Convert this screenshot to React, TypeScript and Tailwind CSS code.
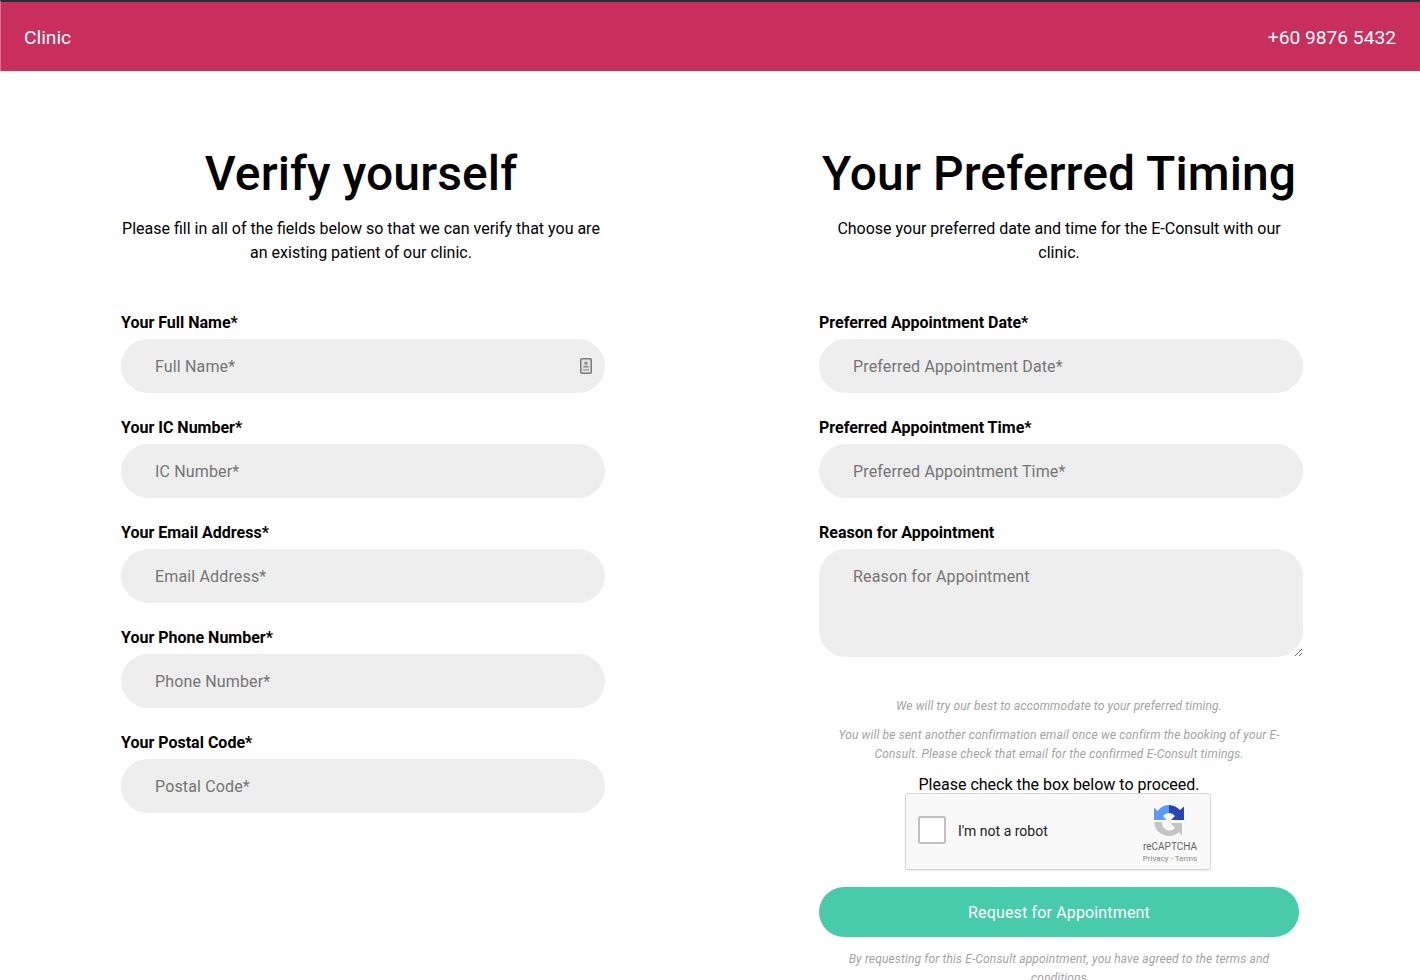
const leftFields = [
  { label: "Your Full Name*", placeholder: "Full Name*", icon: true },
  { label: "Your IC Number*", placeholder: "IC Number*" },
  { label: "Your Email Address*", placeholder: "Email Address*" },
  { label: "Your Phone Number*", placeholder: "Phone Number*" },
  { label: "Your Postal Code*", placeholder: "Postal Code*" },
];

const inputClass =
  "w-full h-[54px] rounded-[27px] bg-[#eeeeee] px-[34px] text-base tracking-[0.15px] text-black outline-none placeholder:text-[#757575]";
const labelClass = "block h-[29px] pt-[1px] text-base leading-[24px] font-bold text-black";
const noteClass = "text-xs leading-[19px] tracking-[0.15px] text-[#a3a3a3] italic";

function ContactIcon() {
  return (
    <svg width="12" height="16" viewBox="0 0 12 16" className="absolute right-[13px] top-[19px]">
      <rect x="0.75" y="0.75" width="10.5" height="14.5" rx="1" fill="#e4e4e4" stroke="#7b7b7b" strokeWidth="1.5" />
      <circle cx="6" cy="5.2" r="1.6" fill="#8a8a8a" />
      <path d="M3 9.5c0-1.2 1-1.8 3-1.8s3 .6 3 1.8z" fill="#8a8a8a" />
      <rect x="3" y="11" width="6" height="1.6" fill="#a5a5a5" />
    </svg>
  );
}

function Field({ label, placeholder, icon }: { label: string; placeholder: string; icon?: boolean }) {
  return (
    <div className="mb-[22px]">
      <label className={labelClass}>{label}</label>
      <div className="relative">
        <input className={inputClass} placeholder={placeholder} />
        {icon && <ContactIcon />}
      </div>
    </div>
  );
}

function RecaptchaLogo() {
  return (
    <svg width="32" height="32" viewBox="0 0 32 32">
      <path d="M15 0V8A8 8 0 0 0 9 11L12.5 15H0V2.5L3.5 6A15 15 0 0 1 15 0Z" fill="#5b9bf8" />
      <path d="M15 0A16 16 0 0 1 26 5L30 1.5V15H17L21 11A8 8 0 0 0 15 8Z" fill="#2a44b5" />
      <path d="M0 17H8A7.5 7.5 0 0 0 21 23L16.5 18H28V31L25 27A15 15 0 0 1 0 17Z" fill="#c4c4c4" />
    </svg>
  );
}

function Recaptcha() {
  return (
    <div className="mx-auto flex h-[77px] w-[306px] items-center rounded-[3px] border border-[#d6d6d6] bg-[#f9f9f9] px-[12px] shadow-[0_1px_1px_rgba(0,0,0,0.08)]">
      <div className="mb-[3px] h-[28px] w-[28px] rounded-[2px] border-2 border-[#c1c1c1] bg-white" />
      <span className="mb-[2px] ml-[12px] text-sm text-[#222222]">I'm not a robot</span>
      <div className="ml-auto flex w-[56px] flex-col items-center pt-[6px]">
        <RecaptchaLogo />
        <span className="mt-[4px] text-[10px] leading-[12px] text-[#666666]">reCAPTCHA</span>
        <span className="text-[8px] leading-[12px] whitespace-nowrap text-[#888888]">Privacy - Terms</span>
      </div>
    </div>
  );
}

export default function App() {
  return (
    <div className="h-[980px] overflow-hidden bg-white font-['Roboto',sans-serif] text-black">
      <header className="flex h-[71px] items-center justify-between border-t-2 border-t-[#2b2b33] border-l border-l-[#d9708f] bg-[#c82f5d] pr-6 pl-[23px] text-[19.2px] text-white">
        <span className="pt-[3px]">Clinic</span>
        <span className="pt-[3px]">+60 9876 5432</span>
      </header>

      <main className="flex gap-[214px] pl-[121px]">
        <section className="w-[484px]">
          <div className="w-[480px] text-center">
            <h1 className="mt-[73px] text-5xl leading-[60px] font-medium tracking-[0.1px]">Verify yourself</h1>
            <p className="mt-[13px] mb-[45px] leading-6">
              Please fill in all of the fields below so that we can verify that you are an existing patient of our clinic.
            </p>
          </div>
          {leftFields.map((f) => (
            <Field key={f.label} label={f.label} placeholder={f.placeholder} icon={f.icon} />
          ))}
        </section>

        <section className="w-[484px]">
          <div className="w-[480px] text-center">
            <h1 className="mt-[73px] text-5xl leading-[60px] font-medium tracking-[0.1px]">Your Preferred Timing</h1>
            <p className="mx-auto mt-[13px] mb-[45px] w-[460px] leading-6">
              Choose your preferred date and time for the E-Consult with our clinic.
            </p>
          </div>
          <Field label="Preferred Appointment Date*" placeholder="Preferred Appointment Date*" />
          <Field label="Preferred Appointment Time*" placeholder="Preferred Appointment Time*" />
          <label className={labelClass}>Reason for Appointment</label>
          <textarea
            className="block h-[108px] w-full rounded-[27px] bg-[#eeeeee] px-[34px] py-[16px] text-base tracking-[0.15px] text-black outline-none placeholder:text-[#757575]"
            placeholder="Reason for Appointment"
          />
          <div className="w-[480px] text-center">
            <div className={`mx-auto mt-[40px] w-[450px] ${noteClass}`}>
              <p>We will try our best to accommodate to your preferred timing.</p>
              <p className="mt-[10px]">
                You will be sent another confirmation email once we confirm the booking of your E-Consult. Please check that email for the confirmed E-Consult timings.
              </p>
            </div>
            <p className="mt-[11px] h-[18px] leading-[19px]">Please check the box below to proceed.</p>
            <div className="pr-[2px]">
              <Recaptcha />
            </div>
            <button className="mt-[17px] h-[50px] w-[480px] rounded-[25px] bg-[#48cbab] pt-[2px] text-base tracking-[0.15px] text-white">Request for Appointment</button>
            <p className={`mx-auto mt-[13px] w-[450px] ${noteClass}`}>
              By requesting for this E-Consult appointment, you have agreed to the terms and conditions
            </p>
          </div>
        </section>
      </main>
    </div>
  );
}
